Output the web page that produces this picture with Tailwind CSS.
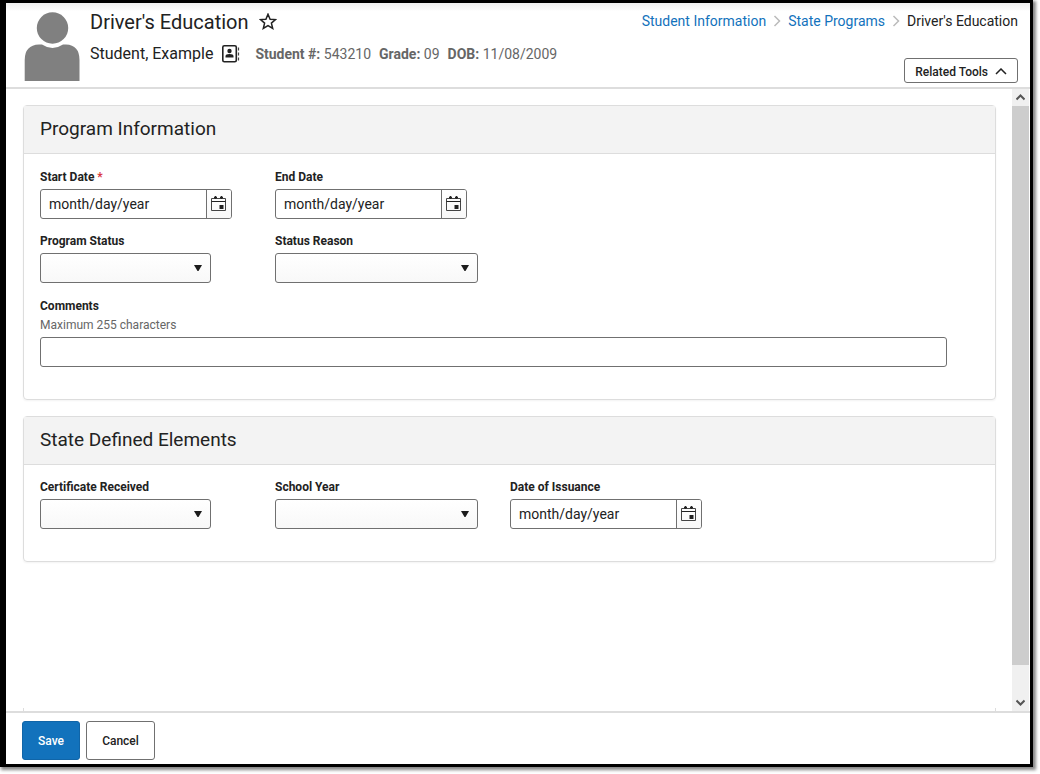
<!DOCTYPE html>
<html lang="en">
    <head>
        <meta charset="UTF-8" />
        <meta name="viewport" content="width=device-width, initial-scale=1.0" />
        <script src="https://cdn.jsdelivr.net/npm/@tailwindcss/browser@4"></script>
        <title>Driver's Education</title>
    </head>
    <body class="h-screen bg-white pr-[7px] pb-[7px] font-[Roboto,sans-serif] text-[#222]">
        <!-- icons used more than once -->
        <svg class="hidden">
            <symbol id="calendar" viewBox="0 0 15 15">
                <path d="M.5 2.500h14v12H.5z" fill="none" stroke="#444" />
                <path d="M.5 5.500h14" stroke="#222" />
                <path d="M3 1.500h3M9 1.500h3M4.500 0v3M10.500 0v3" stroke="#222" stroke-width="1.300" />
                <path d="M8.500 9h4v4h-4z" fill="#222" />
            </symbol>
            <symbol id="arrow" viewBox="0 0 8 6">
                <path d="M0 0h8L4.500 6h-1z" fill="#1c1c1c" />
            </symbol>
            <symbol id="crumb" viewBox="0 0 8 12">
                <path d="M1.500 1L6.500 6l-5 5" fill="none" stroke="#bbb" stroke-width="1.500" />
            </symbol>
        </svg>

        <div class="flex h-full flex-col border-3 border-l-6 border-black bg-white shadow-[2px_2px_3px_1px_#888]">
            <header class="flex h-[86px] shrink-0 justify-between border-b-2 border-[#ddd] bg-linear-to-b from-[#f0f0f0] to-white to-10% pr-3 pl-[18px]">
                <div class="flex">
                    <svg class="mt-[9px] h-[69px] w-[56px]" viewBox="0 0 56 69" fill="#808080">
                        <circle cx="28.500" cy="16" r="15.700" />
                        <path d="M.7 69V48Q.7 33 15 32.500H18Q28.500 39.500 39 32.500H42Q55.500 33 55.500 48V69Z" />
                    </svg>
                    <div class="pt-1 pl-[10px]">
                        <div class="flex h-[30px] items-center gap-[10px]">
                            <h1 class="text-xl">Driver's Education</h1>
                            <button type="button" aria-label="Add to favorites">
                                <svg class="size-[18px]" viewBox="0 0 18 18" fill="none" stroke="#222" stroke-width="1.500">
                                    <path d="M9 1.200L11.100 6.200L16.500 6.600L12.400 10.100L13.700 15.500L9 12.600L4.300 15.500L5.600 10.100L1.500 6.600L6.900 6.200Z" />
                                </svg>
                            </button>
                        </div>
                        <div class="flex h-[34px] items-center">
                            <span class="text-base">Student, Example</span>
                            <svg class="ml-2 h-[19px] w-[20px]" viewBox="0 0 20 19">
                                <rect x="1.800" y=".8" width="13.500" height="16" rx="1.500" fill="none" stroke="#222" stroke-width="1.600" />
                                <circle cx="8.500" cy="6" r="2.200" fill="#222" />
                                <path d="M4.500 12.500v-1.500q0-2 4-2t4 2v1.500z" fill="#222" />
                                <path d="M17.500 2.500v3M17.500 7.500v3M17.500 12.500v3" stroke="#444" stroke-width="1.200" />
                            </svg>
                            <div class="ml-[14px] flex gap-2 text-sm text-[#666]">
                                <span><b>Student #:</b> 543210</span>
                                <span><b>Grade:</b> 09</span>
                                <span><b>DOB:</b> 11/08/2009</span>
                            </div>
                        </div>
                    </div>
                </div>
                <div class="flex flex-col items-end pt-2">
                    <nav class="flex items-center gap-[7px] text-sm" aria-label="Breadcrumb">
                        <a href="#" class="text-[#1272bc]">Student Information</a>
                        <svg class="h-3 w-2"><use href="#crumb" /></svg>
                        <a href="#" class="text-[#1272bc]">State Programs</a>
                        <svg class="h-3 w-2"><use href="#crumb" /></svg>
                        <span>Driver's Education</span>
                    </nav>
                    <button type="button" class="mt-[27px] flex h-[25px] items-center gap-[7px] rounded-[3px] border border-[#707070] px-[10px] pt-[2px] text-xs font-medium">
                        Related Tools
                        <svg class="h-2 w-3" viewBox="0 0 12 8" fill="none" stroke="#222" stroke-width="1.500"><path d="M1 6l5-5 5 5" /></svg>
                    </button>
                </div>
            </header>

            <div class="flex min-h-0 flex-1">
                <main class="flex flex-1 flex-col gap-4 overflow-hidden pt-4 pr-4 pl-[17px]">
                    <section class="rounded-sm border border-[#ddd] shadow-xs">
                        <h2 class="flex h-12 items-center border-b border-[#ddd] bg-[#f3f3f3] px-4 text-[19px]">Program Information</h2>
                        <div class="px-4 pt-[14px] pb-8">
                            <div class="grid grid-cols-[repeat(3,235px)] gap-y-[13px]">
                                <div>
                                    <label for="startDate" class="mb-[3px] block text-xs/[18px] font-bold">Start Date <span class="text-[#d9363e]">*</span></label>
                                    <div class="flex h-[30px] w-[192px] overflow-hidden rounded-[3px] border border-[#707070]">
                                        <input type="text" id="startDate" name="startDate" value="month/day/year" class="min-w-0 flex-1 px-2 text-sm" />
                                        <button type="button" aria-label="Choose start date" class="flex w-[25px] items-center justify-center border-l border-[#707070] bg-linear-to-b from-white to-[#f8f8f8] pr-px pb-px"><svg class="size-[15px]"><use href="#calendar" /></svg></button>
                                    </div>
                                </div>
                                <div>
                                    <label for="endDate" class="mb-[3px] block text-xs/[18px] font-bold">End Date</label>
                                    <div class="flex h-[30px] w-[192px] overflow-hidden rounded-[3px] border border-[#707070]">
                                        <input type="text" id="endDate" name="endDate" value="month/day/year" class="min-w-0 flex-1 px-2 text-sm" />
                                        <button type="button" aria-label="Choose end date" class="flex w-[25px] items-center justify-center border-l border-[#707070] bg-linear-to-b from-white to-[#f8f8f8] pr-px pb-px"><svg class="size-[15px]"><use href="#calendar" /></svg></button>
                                    </div>
                                </div>
                                <div class="col-start-1">
                                    <label for="programStatus" class="mb-[3px] block text-xs/[18px] font-bold">Program Status</label>
                                    <div class="relative w-[171px]">
                                        <select id="programStatus" name="programStatus" class="block h-[30px] w-full appearance-none rounded-[3px] border border-[#707070] bg-linear-to-b from-white to-[#f8f8f8] px-2 text-sm"><option></option></select>
                                        <svg class="pointer-events-none absolute top-3 right-[9px] h-[6px] w-2"><use href="#arrow" /></svg>
                                    </div>
                                </div>
                                <div>
                                    <label for="statusReason" class="mb-[3px] block text-xs/[18px] font-bold">Status Reason</label>
                                    <div class="relative w-[203px]">
                                        <select id="statusReason" name="statusReason" class="block h-[30px] w-full appearance-none rounded-[3px] border border-[#707070] bg-linear-to-b from-white to-[#f8f8f8] px-2 text-sm"><option></option></select>
                                        <svg class="pointer-events-none absolute top-3 right-[9px] h-[6px] w-2"><use href="#arrow" /></svg>
                                    </div>
                                </div>
                            </div>
                            <div class="mt-[14px] mr-8">
                                <label for="comments" class="block text-xs/[18px] font-bold">Comments</label>
                                <p id="commentsHint" class="mt-px mb-[3px] text-xs/[18px] text-[#666]">Maximum 255 characters</p>
                                <input type="text" id="comments" name="comments" maxlength="255" aria-describedby="commentsHint" class="block h-[30px] w-full rounded-[3px] border border-[#707070] px-2 text-sm" />
                            </div>
                        </div>
                    </section>

                    <section class="rounded-sm border border-[#ddd] shadow-xs">
                        <h2 class="flex h-12 items-center border-b border-[#ddd] bg-[#f3f3f3] px-4 text-[19px]">State Defined Elements</h2>
                        <div class="grid grid-cols-[repeat(3,235px)] px-4 pt-[13px] pb-8">
                            <div>
                                <label for="certificate" class="mb-[3px] block text-xs/[18px] font-bold">Certificate Received</label>
                                <div class="relative w-[171px]">
                                    <select id="certificate" name="certificate" class="block h-[30px] w-full appearance-none rounded-[3px] border border-[#707070] bg-linear-to-b from-white to-[#f8f8f8] px-2 text-sm"><option></option></select>
                                    <svg class="pointer-events-none absolute top-3 right-[9px] h-[6px] w-2"><use href="#arrow" /></svg>
                                </div>
                            </div>
                            <div>
                                <label for="schoolYear" class="mb-[3px] block text-xs/[18px] font-bold">School Year</label>
                                <div class="relative w-[203px]">
                                    <select id="schoolYear" name="schoolYear" class="block h-[30px] w-full appearance-none rounded-[3px] border border-[#707070] bg-linear-to-b from-white to-[#f8f8f8] px-2 text-sm"><option></option></select>
                                    <svg class="pointer-events-none absolute top-3 right-[9px] h-[6px] w-2"><use href="#arrow" /></svg>
                                </div>
                            </div>
                            <div>
                                <label for="issuance" class="mb-[3px] block text-xs/[18px] font-bold">Date of Issuance</label>
                                <div class="flex h-[30px] w-[192px] overflow-hidden rounded-[3px] border border-[#707070]">
                                    <input type="text" id="issuance" name="issuance" value="month/day/year" class="min-w-0 flex-1 px-2 text-sm" />
                                    <button type="button" aria-label="Choose date of issuance" class="flex w-[25px] items-center justify-center border-l border-[#707070] bg-linear-to-b from-white to-[#f8f8f8] pr-px pb-px"><svg class="size-[15px]"><use href="#calendar" /></svg></button>
                                </div>
                            </div>
                        </div>
                    </section>

                    <div class="mt-auto h-[3px] border-x border-[#ddd]"></div>
                </main>

                <!-- scrollbar -->
                <div class="mr-px flex w-[17px] flex-col bg-[#f0f0f0]">
                    <div class="flex h-[17px] items-center justify-center">
                        <svg class="h-[7px] w-[9px]" viewBox="0 0 9 7" fill="none" stroke="#555" stroke-width="2"><path d="M.5 5.500l4-4 4 4" /></svg>
                    </div>
                    <div class="flex-1"><div class="h-[95%] bg-[#cdcdcd]"></div></div>
                    <div class="flex h-[17px] items-center justify-center">
                        <svg class="h-[7px] w-[9px]" viewBox="0 0 9 7" fill="none" stroke="#555" stroke-width="2"><path d="M.5 1.500l4 4 4-4" /></svg>
                    </div>
                </div>
            </div>

            <footer class="flex shrink-0 gap-[6px] border-t-2 border-[#ddd] px-4 pt-2 pb-1 text-xs font-medium">
                <button type="submit" class="h-[39px] w-[58px] rounded-[3px] border border-[#1065a8] bg-[#1272bc] text-white">Save</button>
                <button type="button" class="h-[39px] w-[69px] rounded-[3px] border border-[#707070] bg-white">Cancel</button>
            </footer>
        </div>
    </body>
</html>
